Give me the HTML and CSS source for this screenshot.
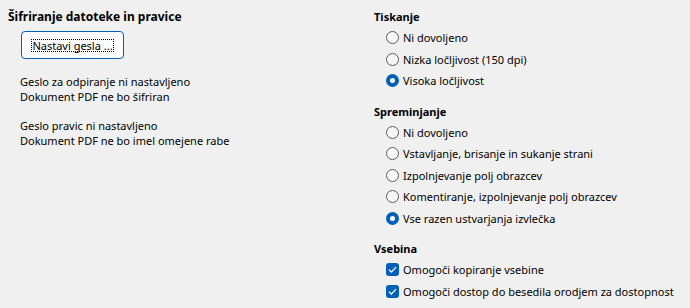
FILE: index.html
```html
<!DOCTYPE html>
<html lang="sl">
<head>
<meta charset="utf-8">
<link rel="stylesheet" href="styles.css">
</head>
<body>
<div class="page">
  <div class="left">
    <div class="title">Šifriranje datoteke in pravice</div>
    <button class="btn"><span class="focus">Nastavi gesla ...</span></button>
    <div class="info first">
      <div>Geslo za odpiranje ni nastavljeno</div>
      <div>Dokument PDF ne bo šifriran</div>
    </div>
    <div class="info">
      <div>Geslo pravic ni nastavljeno</div>
      <div>Dokument PDF ne bo imel omejene rabe</div>
    </div>
  </div>
  <div class="right">
    <div class="group">
      <div class="heading">Tiskanje</div>
      <div class="row"><span class="radio"></span><span>Ni dovoljeno</span></div>
      <div class="row"><span class="radio"></span><span>Nizka ločljivost (150 dpi)</span></div>
      <div class="row"><span class="radio checked"></span><span>Visoka ločljivost</span></div>
    </div>
    <div class="group">
      <div class="heading">Spreminjanje</div>
      <div class="row"><span class="radio"></span><span>Ni dovoljeno</span></div>
      <div class="row"><span class="radio"></span><span>Vstavljanje, brisanje in sukanje strani</span></div>
      <div class="row"><span class="radio"></span><span>Izpolnjevanje polj obrazcev</span></div>
      <div class="row"><span class="radio"></span><span>Komentiranje, izpolnjevanje polj obrazcev</span></div>
      <div class="row"><span class="radio checked"></span><span>Vse razen ustvarjanja izvlečka</span></div>
    </div>
    <div class="group">
      <div class="heading">Vsebina</div>
      <div class="row"><span class="check"><svg width="13" height="13" viewBox="0 0 13 13"><path d="M3.2 6.8 L5.4 9 L9.8 4.4" fill="none" stroke="#fff" stroke-width="1.2" stroke-linecap="round" stroke-linejoin="round"/></svg></span><span>Omogoči kopiranje vsebine</span></div>
      <div class="row"><span class="check"><svg width="13" height="13" viewBox="0 0 13 13"><path d="M3.2 6.8 L5.4 9 L9.8 4.4" fill="none" stroke="#fff" stroke-width="1.2" stroke-linecap="round" stroke-linejoin="round"/></svg></span><span>Omogoči dostop do besedila orodjem za dostopnost</span></div>
    </div>
  </div>
</div>
</body>
</html>
```
FILE: styles.css
```css
html, body {
  margin: 0;
  padding: 0;
  background: #f0f0f0;
}
body {
  width: 690px;
  height: 308px;
  overflow: hidden;
  font-family: "Noto Sans", "DejaVu Sans", sans-serif;
  font-size: 11px;
  color: #000;
}
.page {
  display: flex;
}
.left {
  width: 374px;
  flex: none;
  padding: 9px 0 0 8px;
  box-sizing: border-box;
}
.title {
  font-weight: bold;
  font-size: 12px;
  line-height: 15px;
}
.btn {
  display: flex;
  align-items: center;
  justify-content: center;
  margin: 7px 0 0 13px;
  width: 103px;
  height: 28px;
  padding: 0;
  border: 1px solid #005fb8;
  border-radius: 4px;
  background: #fdfdfd;
  font: inherit;
  color: #000;
}
.focus {
  display: block;
  border: 1px dotted #000;
  line-height: 11px;
  height: 11px;
  width: 81px;
  white-space: nowrap;
  text-align: center;
}
.info {
  margin: 14px 0 0 12px;
  line-height: 15px;
}
.info.first {
  margin-top: 14.5px;
}
.right {
  padding-top: 6px;
}
.group + .group {
  margin-top: 9px;
}
.heading {
  font-weight: bold;
  height: 21px;
  line-height: 21px;
}
.row {
  display: flex;
  align-items: center;
  gap: 4px;
  height: 21.5px;
  padding-left: 12px;
  white-space: nowrap;
}
.radio {
  width: 13px;
  height: 13px;
  box-sizing: border-box;
  border: 1px solid #5c5c5c;
  border-radius: 50%;
  background: #f7f7f7;
  flex: none;
}
.radio.checked {
  border: 4px solid #005fb8;
  background: #fff;
}
.check {
  width: 13px;
  height: 13px;
  border-radius: 3px;
  background: #005fb8;
  flex: none;
  display: flex;
}
```
